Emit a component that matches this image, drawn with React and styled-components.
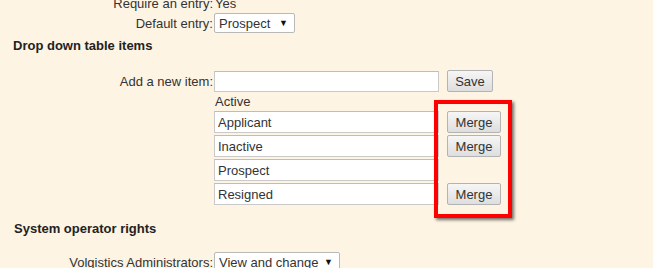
import React from 'react';
import styled, { createGlobalStyle } from 'styled-components';

const GlobalStyle = createGlobalStyle`
  html, body {
    margin: 0;
    padding: 0;
    background: #fdf4e4;
  }
  body {
    font-family: 'Liberation Sans', Arial, sans-serif;
    font-size: 13px;
    color: #333;
  }
`;

const Page = styled.div`
  width: 653px;
  height: 268px;
  overflow: hidden;
  background: #fdf4e4;
`;

const Content = styled.div`
  margin-top: -4px;
`;

const Row = styled.div`
  display: grid;
  grid-template-columns: 214px 1fr;
  align-items: center;
  margin-top: ${(p) => p.top || 0}px;
  line-height: 15px;
`;

const Label = styled.label`
  text-align: right;
  padding-right: 1px;
  color: #333;
`;

const Value = styled.div`
  display: flex;
  align-items: center;
  gap: 8px;
`;

const Heading = styled.h3`
  margin: ${(p) => p.top || 0}px 0 0 ${(p) => p.left || 13}px;
  font-size: 13px;
  line-height: 16px;
  font-weight: bold;
  color: #222;
`;

const Select = styled.div`
  box-sizing: border-box;
  display: flex;
  align-items: center;
  justify-content: space-between;
  width: ${(p) => p.width}px;
  height: ${(p) => p.height || 20}px;
  padding: 0 6px 0 4px;
  background: #fff;
  border: 1px solid #b9b9b9;
  border-radius: 2px;
  font-size: 13px;
  color: #333;

  span.arrow {
    font-size: 9px;
    color: #111;
  }
`;

const TextInput = styled.input`
  box-sizing: border-box;
  width: 225px;
  height: ${(p) => p.height || 22}px;
  margin: 0;
  padding: 0 3px;
  background: #fff;
  border: 1px solid #c9c9c9;
  border-top-color: #bdbdbd;
  font-family: 'Liberation Sans', Arial, sans-serif;
  font-size: 13px;
  color: #333;
  outline: none;
`;

const Button = styled.button`
  box-sizing: border-box;
  width: ${(p) => p.width}px;
  height: 22px;
  margin: 0;
  padding: 0;
  font-family: 'Liberation Sans', Arial, sans-serif;
  font-size: 13px;
  color: #333;
  background: linear-gradient(#f6f6f6, #dedede);
  border: 1px solid #b3b3b3;
  border-radius: 2px;
`;

const List = styled.div`
  position: relative;
  display: flex;
  flex-direction: column;
  gap: 2px;
`;

const SubLabel = styled.div`
  line-height: 15px;
  padding-left: 1px;
`;

const ItemRow = styled.div`
  display: flex;
  align-items: center;
  gap: 8px;
`;

const Highlight = styled.div`
  position: absolute;
  left: 220px;
  top: 6px;
  width: 78px;
  height: 118px;
  box-sizing: border-box;
  border: 4px solid #ff0000;
  box-shadow: 2px 2px 3px rgba(0, 0, 0, 0.55);
  pointer-events: none;
`;

const items = [
  { name: 'Applicant', merge: true },
  { name: 'Inactive', merge: true },
  { name: 'Prospect', merge: false },
  { name: 'Resigned', merge: true },
];

export default function App() {
  return (
    <Page>
      <GlobalStyle />
      <Content>
        <Row>
          <Label>Require an entry:</Label>
          <Value style={{ paddingLeft: 1 }}>Yes</Value>
        </Row>
        <Row top={2}>
          <Label>Default entry:</Label>
          <Value>
            <Select width={81} height={20}>
              Prospect <span className="arrow">▼</span>
            </Select>
          </Value>
        </Row>
        <Heading top={5}>Drop down table items</Heading>
        <Row top={16}>
          <Label>Add a new item:</Label>
          <Value>
            <TextInput height={21} defaultValue="" />
            <Button width={46}>Save</Button>
          </Value>
        </Row>
        <Row top={2}>
          <span />
          <List>
            <SubLabel>Active</SubLabel>
            {items.map((item) => (
              <ItemRow key={item.name}>
                <TextInput defaultValue={item.name} />
                {item.merge && <Button width={54}>Merge</Button>}
              </ItemRow>
            ))}
            <Highlight />
          </List>
        </Row>
        <Heading top={16} left={14}>System operator rights</Heading>
        <Row top={15}>
          <Label>Volgistics Administrators:</Label>
          <Value>
            <Select width={126} height={20}>
              View and change <span className="arrow">▼</span>
            </Select>
          </Value>
        </Row>
      </Content>
    </Page>
  );
}
